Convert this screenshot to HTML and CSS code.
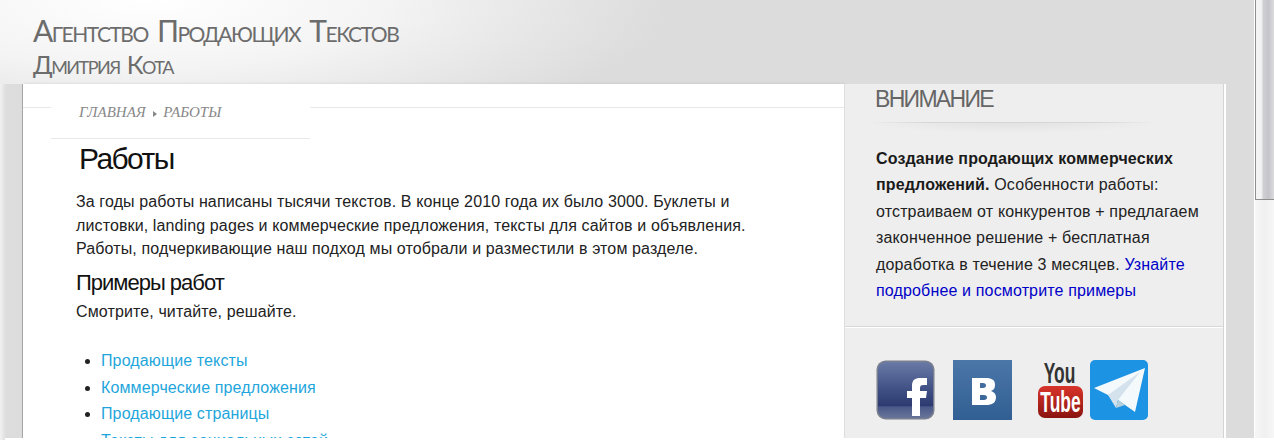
FILE: index.html
```html
<!DOCTYPE html>
<html lang="ru">
<head>
<meta charset="utf-8">
<title>Работы</title>
<link rel="stylesheet" href="styles.css">
</head>
<body>
<div class="page">
  <div class="site">
    <header class="header">
      <div class="logo-top">Агентство Продающих Текстов</div>
      <div class="logo-sub">Дмитрия Кота</div>
    </header>
    <div class="wrap">
      <div class="gutter-left"></div>
      <main class="main">
        <div class="topline"></div>
        <div class="crumbs">Главная <span class="crumb-arrow"></span> Работы</div>
        <h1 class="title">Работы</h1>
        <p class="lead">За годы работы написаны тысячи текстов. В конце 2010 года их было 3000. Буклеты и листовки, landing pages и коммерческие предложения, тексты для сайтов и объявления. Работы, подчеркивающие наш подход мы отобрали и разместили в этом разделе.</p>
        <h2 class="subtitle">Примеры работ</h2>
        <p class="note">Смотрите, читайте, решайте.</p>
        <ul class="list">
          <li><a href="#">Продающие тексты</a></li>
          <li><a href="#">Коммерческие предложения</a></li>
          <li><a href="#">Продающие страницы</a></li>
          <li><a href="#">Тексты для социальных сетей</a></li>
        </ul>
      </main>
      <aside class="side">
        <section class="side-top">
          <h3 class="side-title">ВНИМАНИЕ</h3>
          <div class="side-rule"></div>
          <p class="side-text"><b>Создание продающих коммерческих предложений.</b> Особенности работы: отстраиваем от конкурентов + предлагаем законченное решение + бесплатная доработка в течение 3 месяцев. <a href="#">Узнайте подробнее и посмотрите примеры</a></p>
        </section>
        <section class="social">
          <svg class="icon-fb" width="60" height="60" viewBox="0 0 60 60">
            <defs>
              <linearGradient id="fb" x1="0" y1="0" x2="0" y2="1">
                <stop offset="0" stop-color="#6a7aa6"/>
                <stop offset="0.5" stop-color="#3f4f84"/>
                <stop offset="0.78" stop-color="#2c3a70"/>
                <stop offset="0.8" stop-color="#4a5888"/>
                <stop offset="1" stop-color="#68749a"/>
              </linearGradient>
            </defs>
            <rect x="0.5" y="0.5" width="58" height="59" rx="9" fill="#7b7f8e"/>
            <rect x="2" y="2" width="55" height="56" rx="8" fill="url(#fb)"/>
            <path d="M36 56V38h-5v-7h5v-5c0-6 3-8 8-8h7v7h-4c-2 0-3 1-3 3v3h7l-1 7h-6v18z" fill="#fff"/>
          </svg>
          <svg class="icon-vk" width="60" height="60" viewBox="0 0 60 60">
            <defs>
              <linearGradient id="vk" x1="0" y1="0" x2="0" y2="1">
                <stop offset="0" stop-color="#4a76a8"/>
                <stop offset="1" stop-color="#325f93"/>
              </linearGradient>
            </defs>
            <rect width="59" height="60" fill="url(#vk)"/>
            <path fill-rule="evenodd" d="M19 18h14c6 0 9 2 9 7 0 3-1 5-4 6 3 1 5 3 5 6 0 6-4 8-10 8H19zM27 23v5h3c2 0 3-1 3-2.500s-1-2.500-3-2.500zM27 35v5h4c2 0 3-1 3-2.500s-1-2.500-3-2.500z" fill="#fff"/>
          </svg>
          <svg class="icon-yt" width="46" height="60" viewBox="0 0 46 60">
            <defs>
              <linearGradient id="yt" x1="0" y1="0" x2="0" y2="1">
                <stop offset="0" stop-color="#d8342a"/>
                <stop offset="1" stop-color="#8a1410"/>
              </linearGradient>
            </defs>
            <text class="yt-you" x="21.500" y="23" text-anchor="middle">You</text>
            <rect x="0" y="26" width="45" height="32" rx="7" fill="url(#yt)"/>
            <text class="yt-tube" x="22.500" y="52" text-anchor="middle">Tube</text>
          </svg>
          <svg class="icon-tg" width="58" height="60" viewBox="0 0 58 60">
            <rect width="58" height="60" rx="5" fill="#1c93e3"/>
            <path d="M4 28 55 8 45 52 28 40z" fill="#f4f9fc"/>
            <path d="M18 35 50 12 28 40 26 48z" fill="#d3e2ec"/>
            <path d="M26 48 28 40 35 45z" fill="#b9cfdc"/>
          </svg>
        </section>
      </aside>
      <div class="gutter-right"></div>
    </div>
  </div>
  <div class="scrollbar"><div class="thumb"></div></div>
  <div class="bottom-strip"></div>
</div>
</body>
</html>
```
FILE: styles.css
```css
html, body {
  margin: 0;
  padding: 0;
  height: 100%;
  overflow: hidden;
  background: #fff;
}
body {
  font-family: "Liberation Sans", Arial, sans-serif;
  color: #111;
}
.page {
  position: relative;
  display: flex;
  height: 440px;
  overflow: hidden;
}
.site {
  width: 1254px;
  display: flex;
  flex-direction: column;
  flex: none;
}
.header {
  height: 84px;
  flex: none;
  box-sizing: border-box;
  padding: 13px 0 0 33px;
  background: radial-gradient(ellipse 520px 150px at 150px 0, #fff 0, #f4f4f4 45%, #dcdcdc 100%) #dcdcdc;
  font-family: Lato, "Open Sans", sans-serif;
  font-variant: small-caps;
  color: #6c6c6c;
  white-space: nowrap;
}
.logo-top {
  font-size: 30px;
  line-height: 34px;
  letter-spacing: -1.500px;
  word-spacing: 3px;
}
.logo-sub {
  font-size: 25px;
  line-height: 28px;
  margin-top: 3px;
  letter-spacing: -1.500px;
  word-spacing: 2px;
}
.wrap {
  display: flex;
  flex: 1;
  min-height: 0;
}
.gutter-left {
  width: 22px;
  flex: none;
  background: linear-gradient(90deg, #f2f2f2 0, #dddddd 6px, #dcdcdc 100%);
  border-right: 1px solid #aaa;
}
.main {
  width: 821px;
  flex: none;
  background: #fff;
  overflow: hidden;
  box-shadow: 1px 0 3px rgba(0, 0, 0, .12);
}
.topline {
  height: 23px;
  border-bottom: 1px solid #e8e8e8;
}
.crumbs {
  width: 259px;
  height: 32px;
  box-sizing: border-box;
  margin: -1px 0 0 28px;
  padding: 0 0 0 28px;
  position: relative;
  background: #fff;
  border-bottom: 1px solid #e8e8e8;
  font: italic 15px/10px "Liberation Serif", serif;
  text-transform: uppercase;
  color: #888;
}
.crumb-arrow {
  display: inline-block;
  width: 0;
  height: 0;
  margin: 0 2px 0 4px;
  vertical-align: 0;
  border-left: 4px solid #888;
  border-top: 3px solid transparent;
  border-bottom: 3px solid transparent;
}
.title {
  margin: 2px 0 0 56px;
  font-size: 30px;
  line-height: 36px;
  font-weight: 400;
  letter-spacing: -1.600px;
  color: #111;
}
.lead {
  margin: 13px 0 0 53px;
  width: 690px;
  font-size: 16px;
  line-height: 23.500px;
  letter-spacing: 0.120px;
  color: #222;
}
.subtitle {
  margin: 7px 0 0 53px;
  font-size: 22px;
  line-height: 30px;
  font-weight: 400;
  letter-spacing: -1px;
  color: #111;
}
.note {
  margin: 2px 0 0 53px;
  font-size: 16px;
  line-height: 24px;
  letter-spacing: 0.120px;
  color: #222;
}
.list {
  margin: 24.800px 0 0 53px;
  padding: 0 0 0 25px;
  font-size: 16px;
  line-height: 26.400px;
  letter-spacing: 0.120px;
  color: #222;
}
.list a {
  color: #1ea6dc;
  text-decoration: none;
}
.side {
  width: 380px;
  flex: none;
  box-sizing: border-box;
  background: #eee;
  border-left: 1px solid #ddd;
  border-right: 1px solid #d4d4d4;
  box-shadow: 1px 0 0 #fff, 2px 0 0 #fff;
}
.side-top {
  height: 243px;
  box-sizing: border-box;
  border-bottom: 1px solid #d8d8d8;
  box-shadow: 0 1px 0 #fff;
  padding: 0 15px 0 31px;
}
.side-title {
  margin: 0 0 0 -1px;
  font-size: 23px;
  line-height: 30px;
  font-weight: 400;
  letter-spacing: -1.700px;
  color: #666;
}
.side-rule {
  width: 285px;
  height: 10px;
  margin: 8px 0 0 -6px;
  border-top: 1px solid;
  border-image: linear-gradient(90deg, #eee, #d6d6d6 20%, #d6d6d6 80%, #eee) 1;
  background: radial-gradient(ellipse 50% 100% at 50% 0, #e2e2e2, #eee);
}
.side-text {
  margin: 13px 0 0;
  font-size: 16px;
  line-height: 26.400px;
  letter-spacing: 0.150px;
  color: #222;
}
.side-text b {
  color: #1a1a1a;
}
.side-text a {
  color: #0000c8;
  text-decoration: none;
}
.social {
  display: flex;
  align-items: flex-start;
  padding: 33px 0 0 31px;
}
.social svg {
  overflow: visible;
}
.icon-fb { margin-right: 17px; flex: none; }
.icon-vk { margin-right: 25px; flex: none; }
.icon-yt { margin-right: 6px; flex: none; }
.icon-tg { flex: none; }
.yt-you {
  font: 700 29px "Liberation Sans", sans-serif;
  fill: #333;
  transform-box: fill-box;
  transform-origin: center;
  transform: scaleX(0.6);
}
.yt-tube {
  font: 700 29px "Liberation Sans", sans-serif;
  fill: #fff;
  transform-box: fill-box;
  transform-origin: center;
  transform: scaleX(0.6);
}
.gutter-right {
  flex: 1;
  background: #dcdcdc;
  margin-left: 2px;
}
.scrollbar {
  flex: 1;
  box-sizing: border-box;
  background: linear-gradient(90deg, #f6f6f6, #f0f0f0 50%, #f6f6f6);
  border-left: 1px solid #fff;
}
.thumb {
  height: 200px;
  box-sizing: border-box;
  margin-left: 0;
  background: linear-gradient(90deg, #f4f4f4 0, #f2f2f2 30%, #cfcfd4 40%, #c4c4ca 70%, #dcdcdf 100%);
  border-left: 1px solid #8e8e8e;
  border-bottom: 1px solid #8e8e8e;
}
.bottom-strip {
  position: absolute;
  left: 5px;
  right: 0;
  bottom: 0;
  height: 2px;
  background: #fff;
}
```
